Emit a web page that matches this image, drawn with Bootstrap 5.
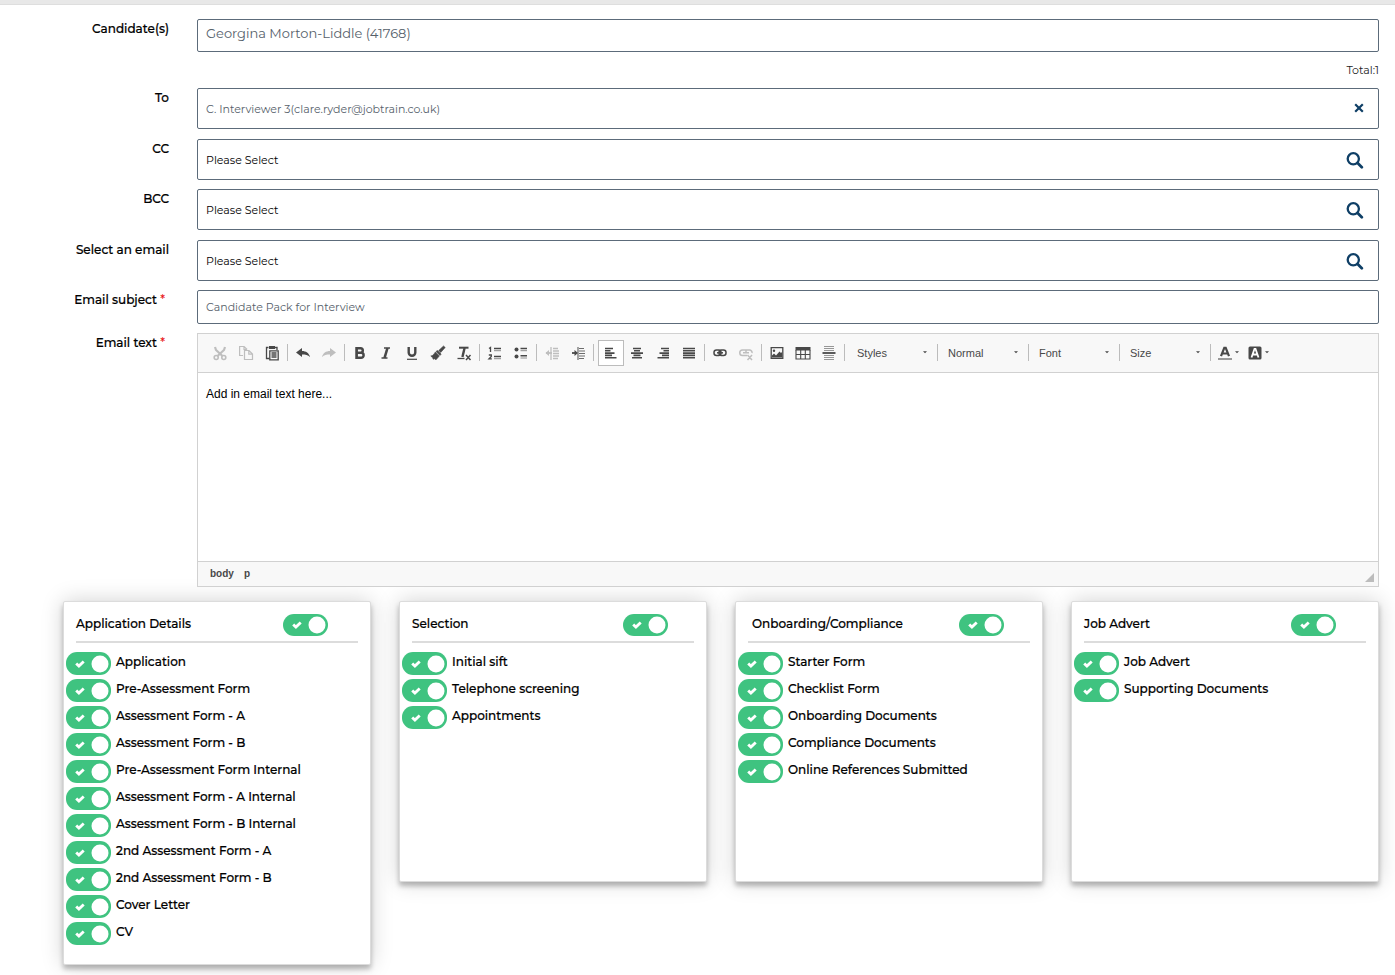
<!DOCTYPE html>
<html lang="en">
<head>
<meta charset="utf-8">
<meta name="viewport" content="width=device-width, initial-scale=1">
<title>Email candidate pack</title>
<link href="https://cdn.jsdelivr.net/npm/bootstrap@5.3.0/dist/css/bootstrap.min.css" rel="stylesheet">
<style>
body{font-family:Montserrat,Inter,sans-serif;font-size:12px;line-height:18px;color:#000;background:#fff}
.top-strip{height:5px;background:#e8e8e8;border-bottom:1px solid #dedede}
.page{padding:14px 16px 10px 63px}
.form-line{display:flex;gap:28px;margin-bottom:10px}
.form-line.tight{margin-bottom:9px}
.form-line>label{width:106px;flex:none;text-align:right;white-space:nowrap}
.form-line>label,.pack label{font-weight:500;line-height:20px;-webkit-text-stroke:.2px currentColor}
.req{color:#e81818;margin-right:4px;-webkit-text-stroke:0}
.field{border:1px solid #5c6b7a;border-radius:2px;padding:0 8px;font-size:11px;line-height:18px;color:#000;background-color:#fff;width:100%}
.field-muted{color:#56616b}
.field-names{height:33px;font-size:13px;padding-bottom:6px}
.field-to{height:41px}
.field-subject{height:34px}
.lookup{height:41px;background:url("data:image/svg+xml,%3Csvg xmlns='http://www.w3.org/2000/svg' viewBox='0 0 18 18' fill='none' stroke='%230f3f66'%3E%3Ccircle cx='7.3' cy='7.8' r='5.6' stroke-width='2.3'/%3E%3Cpath d='M11.6 12.100l4.200 4.200' stroke-width='2.800' stroke-linecap='round'/%3E%3C/svg%3E") no-repeat right 14px center/18px #fff}
.clear-btn{position:absolute;right:12px;top:12px;width:16px;height:16px;padding:0;border:0;background:none;display:flex;align-items:center;justify-content:center}
.total{font-size:11px;padding:9px 0;text-align:right;color:#222}
.editor{border:1px solid #d1d1d1;background:#fff;position:relative;z-index:1;font-family:"Liberation Sans",Arial,sans-serif}
.tools{display:flex;flex-wrap:wrap;align-items:center;height:39px;padding:0 9px 1px;background:#f8f8f8;border-bottom:1px solid #d1d1d1}
.tool{width:26px;height:26px;padding:0;border:1px solid transparent;background:none;color:#484848;display:flex;align-items:center;justify-content:center}
.tool svg{width:16px;height:16px}
.tool[disabled]{opacity:.32}
.tool.chosen{background:#fff;border-color:#bcbcbc}
.tool-colour{width:30px;gap:2px}
.tool-colour .arrow{width:4px;height:3px}
.divide{width:1px;height:17px;background:#bcbcbc;margin:0 2px}
.pick{width:86px;height:26px;padding:0 8px;border:0;border-radius:0;font-size:11px;line-height:18px;color:#484848;background:url("data:image/svg+xml,%3Csvg xmlns='http://www.w3.org/2000/svg' viewBox='0 0 5 3'%3E%3Cpath d='M0 0h5L2.5 2.5z' fill='%23484848'/%3E%3C/svg%3E") no-repeat right 8px center/4px 3px transparent}
.writing{display:block;width:100%;height:188px;border:0;resize:none;outline:0;padding:12px 8px;font-size:12px;line-height:18px;color:#000}
.path-bar{display:flex;align-items:center;gap:10px;height:25px;padding:0 4px 0 12px;background:#f8f8f8;border-top:1px solid #d1d1d1;font-size:10px;font-weight:700;line-height:16px}
.path-bar a{color:#484848;text-decoration:none}
.packs{display:grid;grid-template-columns:repeat(4,minmax(0,1fr));gap:28px;align-items:start;margin-top:14px}
.pack{border:1px solid #dcdcdc;border-radius:2px;min-height:281px;padding:0 2px 15px;background:#fff;box-shadow:0 4px 5px rgba(0,0,0,.25),0 0 22px rgba(0,0,0,.18)}
.pack-head{display:flex;justify-content:space-between;margin:0 10px 9px;padding:12px 30px 5px 0;border-bottom:2px solid #dcdcdc}
.pack-head.inset{padding-right:26px}
.pack label{white-space:nowrap}
.pack-item{display:flex;gap:5px;height:27px}
.toggle.form-check-input{width:45px;height:22px;margin:0;border:0;border-radius:11px;flex:none;background:#3fc380 url("data:image/svg+xml,%3Csvg xmlns='http://www.w3.org/2000/svg' viewBox='0 0 45 22'%3E%3Ccircle cx='34' cy='11' r='8.5' fill='%23fff'/%3E%3Cpath d='M10.2 10.5l2.700 2.500 4.800-4.500' fill='none' stroke='%23fff' stroke-width='2.9'/%3E%3C/svg%3E") no-repeat center/45px 22px}
.pack-item .toggle.form-check-input{height:23px}
</style>
</head>
<body>
<div class="top-strip"></div>
<main class="page">
<form>
  <div class="form-line mb-0"><label for="cand">Candidate(s)</label>
    <div class="flex-fill"><input id="cand" class="field field-muted field-names d-block" value="Georgina Morton-Liddle (41768)" readonly></div></div>
  <div class="total">Total:1</div>
  <div class="form-line"><label for="to">To</label>
    <div class="flex-fill position-relative"><input id="to" class="field field-muted field-to d-block" value="C. Interviewer 3(clare.ryder@jobtrain.co.uk)" readonly>
      <button type="button" class="clear-btn" aria-label="Clear"><svg width="10" height="10" viewBox="0 0 10 10"><path d="M1.2 1.2l7.6 7.6M8.8 1.2L1.2 8.8" stroke="#0f3f66" stroke-width="2.2"/></svg></button></div></div>
  <div class="form-line tight"><label for="cc">CC</label><div class="flex-fill"><select id="cc" class="field lookup form-select d-block"><option>Please Select</option></select></div></div>
  <div class="form-line"><label for="bcc">BCC</label><div class="flex-fill"><select id="bcc" class="field lookup form-select d-block"><option>Please Select</option></select></div></div>
  <div class="form-line tight"><label for="mail">Select an email</label><div class="flex-fill"><select id="mail" class="field lookup form-select d-block"><option>Please Select</option></select></div></div>
  <div class="form-line tight"><label for="subj">Email subject <span class="req">*</span></label><div class="flex-fill"><input id="subj" class="field field-muted field-subject d-block" value="Candidate Pack for Interview"></div></div>
  <div class="form-line mb-0"><label for="text">Email text <span class="req">*</span></label>
    <div class="editor flex-fill">
      <div class="tools" role="toolbar" aria-label="Editor toolbar">
        <button type="button" class="tool" aria-label="Cut" disabled><svg viewBox="0 0 16 16" fill="none" stroke="currentColor" stroke-width="1.6"><path d="M3 2l1 3 6.5 6M13 2l-1 3-6.500 6" stroke-width="2.2"/><circle cx="4.200" cy="12.500" r="2"/><circle cx="11.800" cy="12.500" r="2"/></svg></button>
        <button type="button" class="tool" aria-label="Copy" disabled><svg viewBox="0 0 16 16" fill="none" stroke="currentColor" stroke-width="1.200"><path d="M5 10.500H1.600v-9h4.500l3 3M6 1.500v3h3M6.500 5.500h4.500l3.500 3.500v5.500h-8zM10.800 5.500v3.700h3.700"/></svg></button>
        <button type="button" class="tool" aria-label="Paste"><svg viewBox="0 0 16 16"><path d="M4.500 2.500h-2v11h3M11 2.500h2V5" fill="none" stroke="currentColor" stroke-width="1.300"/><path d="M5 1h6v3H5z" fill="currentColor"/><path d="M5.800 5.800h8.400v9H5.800zM7.500 8h5M7.500 10h5M7.500 12h5" fill="none" stroke="currentColor" stroke-width="1.300"/></svg></button>
        <span class="divide"></span>
        <button type="button" class="tool" aria-label="Undo"><svg viewBox="0 0 16 16" fill="currentColor"><path d="M1 7.500L7 3v3c4 0 7 2 8 6-2-2-4.500-2.500-8-2.500V12z"/></svg></button>
        <button type="button" class="tool" aria-label="Redo" disabled><svg viewBox="0 0 16 16" fill="currentColor"><path d="M15 7.500L9 3v3c-4 0-7 2-8 6 2-2 4.500-2.500 8-2.500V12z"/></svg></button>
        <span class="divide"></span>
        <button type="button" class="tool" aria-label="Bold"><svg viewBox="0 0 16 16" fill="none" stroke="currentColor" stroke-width="2.500"><path d="M4.500 3.200h4a2.300 2.300 0 0 1 0 4.600h-4h4.600a2.500 2.500 0 0 1 0 5H4.500zM4.700 3v10"/></svg></button>
        <button type="button" class="tool" aria-label="Italic"><svg viewBox="0 0 16 16" fill="none" stroke="currentColor"><path d="M6 3h6M3.500 13h6" stroke-width="1.700"/><path d="M9.500 3l-3 10" stroke-width="2.600"/></svg></button>
        <button type="button" class="tool" aria-label="Underline"><svg viewBox="0 0 16 16" fill="none" stroke="currentColor"><path d="M4.700 2v5.500a3.300 3.300 0 0 0 6.600 0V2" stroke-width="2.400"/><path d="M3 14.300h10" stroke-width="1.200"/></svg></button>
        <button type="button" class="tool" aria-label="Copy formatting"><svg viewBox="0 0 16 16" fill="currentColor"><path d="M13.500 1l1.700 1.500-4.500 5-2-2zM7.500 5.500l3.700 3.600-1.200 1.300-4-4zM5.400 7l3.900 4-3.300 3.800-1.500-1-1.200.5-.8-1.700L.8 11C3.500 10.600 3.800 9 5.400 7z" stroke="currentColor" stroke-width=".6"/></svg></button>
        <button type="button" class="tool" aria-label="Remove format"><svg viewBox="0 0 16 16" fill="none" stroke="currentColor"><path d="M3 2.700h9.500" stroke-width="2"/><path d="M1.500 13.500h7" stroke-width="1.300"/><path d="M8.600 3L6.400 12" stroke-width="2.400"/><path d="M10 10l4.500 5M14.500 10L10 15" stroke-width="1.500"/></svg></button>
        <span class="divide"></span>
        <button type="button" class="tool" aria-label="Numbered list"><svg viewBox="0 0 16 16" fill="none" stroke="currentColor"><path d="M2 3.500l1.500-1V7M1.800 10h2.500v1.500L2 13.800h2.800" stroke-width="1.300"/><path d="M7 3.500h7M7 11.500h7" stroke-width="1.500"/><path d="M7 5.700h7M7 13.700h7" opacity=".6"/></svg></button>
        <button type="button" class="tool" aria-label="Bulleted list"><svg viewBox="0 0 16 16" fill="none" stroke="currentColor"><circle cx="3.500" cy="4.500" r="2" fill="currentColor" stroke="none"/><circle cx="3.500" cy="11.500" r="2" fill="currentColor" stroke="none"/><path d="M7.500 3.500h6.500M7.500 10.700h6.500" stroke-width="1.500"/><path d="M7.500 5.700h6.500M7.500 13h6.500" opacity=".6"/></svg></button>
        <span class="divide"></span>
        <button type="button" class="tool" aria-label="Decrease indent" disabled><svg viewBox="0 0 16 16" fill="none" stroke="currentColor"><path d="M9 3.500h5M9 6h6M9 8.500h6M9 11h6M9 13.500h5M7 2v13" stroke-width="1.300"/><path d="M2 8h6" stroke-width="1.800"/><path d="M5 5v6L1.500 8z" fill="currentColor" stroke="none"/></svg></button>
        <button type="button" class="tool" aria-label="Increase indent"><svg viewBox="0 0 16 16" fill="none" stroke="currentColor"><path d="M9 3.500h5M9 6h6M9 8.500h6M9 11h6M9 13.500h5M8 2v13" stroke-width="1.200" opacity=".8"/><path d="M2 8h5" stroke-width="1.800"/><path d="M4.500 5v6L8 8z" fill="currentColor" stroke="none"/></svg></button>
        <span class="divide me-1"></span>
        <button type="button" class="tool chosen" aria-label="Align left"><svg viewBox="0 0 16 16" stroke="currentColor" stroke-width="1.600"><path d="M2 3.500h8M2 5.800h5.500M2 8.100h9.500M2 10.400h7M2 12.700h11.500"/></svg></button>
        <button type="button" class="tool" aria-label="Centre"><svg viewBox="0 0 16 16" stroke="currentColor" stroke-width="1.600"><path d="M4 3.500h8M5 5.800h6M2 8.100h12M4.500 10.400h7M3 12.700h10"/></svg></button>
        <button type="button" class="tool" aria-label="Align right"><svg viewBox="0 0 16 16" stroke="currentColor" stroke-width="1.600"><path d="M6 3.500h8M8.500 5.800H14M4.500 8.100H14M7 10.400h7M2.500 12.700H14"/></svg></button>
        <button type="button" class="tool" aria-label="Justify"><svg viewBox="0 0 16 16" stroke="currentColor" stroke-width="1.600"><path d="M2 3.500h12M2 5.800h12M2 8.100h12M2 10.400h12M2 12.700h12"/></svg></button>
        <span class="divide"></span>
        <button type="button" class="tool" aria-label="Link"><svg viewBox="0 0 16 16" fill="none" stroke="currentColor" stroke-width="1.500"><rect x="2" y="5" width="7" height="5.500" rx="2.500"/><rect x="7" y="5" width="7" height="5.500" rx="2.500"/><path d="M5 7.800h6"/></svg></button>
        <button type="button" class="tool" aria-label="Unlink" disabled><svg viewBox="0 0 16 16" fill="none" stroke="currentColor" stroke-width="1.500"><path d="M9 10.500H4.500a2.500 2.500 0 0 1 0-5.500h7a2.500 2.500 0 0 1 2.500 3M5 7.800h6M8 5v3M9.500 10l4.500 5M14 10l-4.500 5"/></svg></button>
        <span class="divide"></span>
        <button type="button" class="tool" aria-label="Image"><svg viewBox="0 0 16 16"><path d="M2.200 2.700h11.600v10.600H2.200z" fill="none" stroke="currentColor" stroke-width="1.300"/><circle cx="5" cy="5.700" r="1.200" fill="currentColor"/><path d="M3 12.500v-2l2-2 2 2 3.500-4L12 8l1-1v5.500z" fill="currentColor"/></svg></button>
        <button type="button" class="tool" aria-label="Table"><svg viewBox="0 0 16 16"><path d="M.5 2h15v3.500H.5z" fill="currentColor"/><path d="M1 5v9h14V5M1 9.500h14M5.700 5v9M10.300 5v9" fill="none" stroke="currentColor" stroke-width="1.100"/></svg></button>
        <button type="button" class="tool" aria-label="Horizontal line"><svg viewBox="0 0 16 16" stroke="currentColor"><path d="M3 1.500h10M3 3.500h10M3 5.500h10M3 10.500h10M3 12.500h10M3 14.500h10" opacity=".55"/><path d="M1.500 8h13" stroke-width="1.800"/></svg></button>
        <span class="divide me-1"></span>
        <select class="pick form-select" aria-label="Styles"><option>Styles</option></select>
        <span class="divide"></span>
        <select class="pick form-select" aria-label="Paragraph format"><option>Normal</option></select>
        <span class="divide"></span>
        <select class="pick form-select" aria-label="Font"><option>Font</option></select>
        <span class="divide"></span>
        <select class="pick form-select" aria-label="Size"><option>Size</option></select>
        <span class="divide"></span>
        <button type="button" class="tool tool-colour" aria-label="Text colour"><svg viewBox="0 0 16 16" fill="none" stroke="currentColor"><path d="M4 11.200L7.300 2.800h1.400L12 11.200M5.500 8.500h5" stroke-width="2.200"/><path d="M1 14h14" stroke-width="1.800" opacity=".6"/></svg><svg class="arrow" viewBox="0 0 5 3"><path d="M0 0h5L2.500 2.500z" fill="currentColor"/></svg></button>
        <button type="button" class="tool tool-colour" aria-label="Background colour"><svg viewBox="0 0 16 16"><rect x="1.500" y="1.500" width="13" height="13" rx="1.500" fill="currentColor"/><path d="M4.500 12.500L7.500 4h1l3 8.500M5.800 9.500h4.400" fill="none" stroke="#fff" stroke-width="1.800"/></svg><svg class="arrow" viewBox="0 0 5 3"><path d="M0 0h5L2.500 2.500z" fill="currentColor"/></svg></button>
      </div>
      <textarea id="text" class="writing">Add in email text here...</textarea>
      <div class="path-bar"><a href="#">body</a><a href="#">p</a><svg class="ms-auto align-self-end mb-1" width="9" height="9" viewBox="0 0 9 9"><path d="M9 0v9H0z" fill="#bcbcbc"/></svg></div>
    </div></div>

  <div class="packs">
    <section class="pack">
      <div class="pack-head"><label for="a0">Application Details</label><input class="toggle form-check-input" type="checkbox" id="a0" checked></div>
      <div class="pack-item"><input class="toggle form-check-input" type="checkbox" id="a1" checked><label for="a1">Application</label></div>
      <div class="pack-item"><input class="toggle form-check-input" type="checkbox" id="a2" checked><label for="a2">Pre-Assessment Form</label></div>
      <div class="pack-item"><input class="toggle form-check-input" type="checkbox" id="a3" checked><label for="a3">Assessment Form - A</label></div>
      <div class="pack-item"><input class="toggle form-check-input" type="checkbox" id="a4" checked><label for="a4">Assessment Form - B</label></div>
      <div class="pack-item"><input class="toggle form-check-input" type="checkbox" id="a5" checked><label for="a5">Pre-Assessment Form Internal</label></div>
      <div class="pack-item"><input class="toggle form-check-input" type="checkbox" id="a6" checked><label for="a6">Assessment Form - A Internal</label></div>
      <div class="pack-item"><input class="toggle form-check-input" type="checkbox" id="a7" checked><label for="a7">Assessment Form - B Internal</label></div>
      <div class="pack-item"><input class="toggle form-check-input" type="checkbox" id="a8" checked><label for="a8">2nd Assessment Form - A</label></div>
      <div class="pack-item"><input class="toggle form-check-input" type="checkbox" id="a9" checked><label for="a9">2nd Assessment Form - B</label></div>
      <div class="pack-item"><input class="toggle form-check-input" type="checkbox" id="a10" checked><label for="a10">Cover Letter</label></div>
      <div class="pack-item"><input class="toggle form-check-input" type="checkbox" id="a11" checked><label for="a11">CV</label></div>
    </section>
    <section class="pack">
      <div class="pack-head inset"><label for="s0">Selection</label><input class="toggle form-check-input" type="checkbox" id="s0" checked></div>
      <div class="pack-item"><input class="toggle form-check-input" type="checkbox" id="s1" checked><label for="s1">Initial sift</label></div>
      <div class="pack-item"><input class="toggle form-check-input" type="checkbox" id="s2" checked><label for="s2">Telephone screening</label></div>
      <div class="pack-item"><input class="toggle form-check-input" type="checkbox" id="s3" checked><label for="s3">Appointments</label></div>
    </section>
    <section class="pack">
      <div class="pack-head inset ps-1"><label for="o0">Onboarding/Compliance</label><input class="toggle form-check-input" type="checkbox" id="o0" checked></div>
      <div class="pack-item"><input class="toggle form-check-input" type="checkbox" id="o1" checked><label for="o1">Starter Form</label></div>
      <div class="pack-item"><input class="toggle form-check-input" type="checkbox" id="o2" checked><label for="o2">Checklist Form</label></div>
      <div class="pack-item"><input class="toggle form-check-input" type="checkbox" id="o3" checked><label for="o3">Onboarding Documents</label></div>
      <div class="pack-item"><input class="toggle form-check-input" type="checkbox" id="o4" checked><label for="o4">Compliance Documents</label></div>
      <div class="pack-item"><input class="toggle form-check-input" type="checkbox" id="o5" checked><label for="o5">Online References Submitted</label></div>
    </section>
    <section class="pack">
      <div class="pack-head"><label for="j0">Job Advert</label><input class="toggle form-check-input" type="checkbox" id="j0" checked></div>
      <div class="pack-item"><input class="toggle form-check-input" type="checkbox" id="j1" checked><label for="j1">Job Advert</label></div>
      <div class="pack-item"><input class="toggle form-check-input" type="checkbox" id="j2" checked><label for="j2">Supporting Documents</label></div>
    </section>
  </div>
</form>
</main>
<script src="https://cdn.jsdelivr.net/npm/bootstrap@5.3.0/dist/js/bootstrap.bundle.min.js"></script>
</body>
</html>
